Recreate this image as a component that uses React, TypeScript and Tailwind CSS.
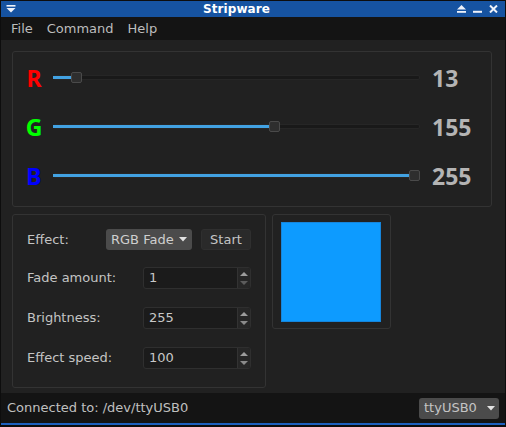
import React from 'react';

const channels = [
  { name: 'R', value: 13, color: 'text-[#ff0000]' },
  { name: 'G', value: 155, color: 'text-[#00ff00]' },
  { name: 'B', value: 255, color: 'text-[#0000ff]' },
];

function Slider({ value }: { value: number }) {
  const left = Math.round((value / 255) * 356);
  return (
    <div className="relative w-[367px] h-[24px] ml-[6px]">
      {/* groove */}
      <div className="absolute left-0 right-0 top-[9px] h-[5px] rounded-[2px] bg-[#191919] border border-[#262626]" />
      {/* filled part */}
      <div className="absolute left-0 top-[10px] h-[3px] bg-[#42a2e2]" style={{ width: left + 4 }} />
      {/* handle */}
      <div
        className="absolute top-[6px] w-[11px] h-[11px] rounded-[2px] bg-[#2e2e2e] border border-[#4a4a4a]"
        style={{ left }}
      />
    </div>
  );
}

function SpinBox({ value, downDim }: { value: string; downDim?: boolean }) {
  return (
    <div className="w-[108px] h-[22px] flex items-center rounded-[3px] bg-[#1b1b1b] border border-[#2f2f2f]">
      <span className="flex-1 pl-[5px] text-[#c8c8c8]">{value}</span>
      <div className="w-[13px] h-[20px] flex flex-col items-center justify-center gap-[5px] bg-[#262626] border-l border-[#333] rounded-r-[2px]">
        <svg width="8" height="4" viewBox="0 0 8 4">
          <path d="M0 4 L4 0 L8 4 Z" fill="#9c9c9c" />
        </svg>
        <svg width="8" height="4" viewBox="0 0 8 4">
          <path d="M0 0 L8 0 L4 4 Z" fill={downDim ? '#5c5c5c' : '#8a8a8a'} />
        </svg>
      </div>
    </div>
  );
}

function ComboArrow() {
  return (
    <svg width="8" height="5" viewBox="0 0 8 5">
      <path d="M0 0 L8 0 L4 4.5 Z" fill="#e2e2e2" />
    </svg>
  );
}

export default function App() {
  return (
    <div className="w-[506px] h-[427px] bg-[#0d0d0d] pt-px px-px pb-[2px] flex flex-col font-['DejaVu_Sans',sans-serif] text-[13px] overflow-hidden">
      {/* Title bar */}
      <div className="h-[16px] bg-[#1653a1] flex items-center px-[4px] text-white">
        <svg width="10" height="8" viewBox="0 0 10 8" className="ml-px">
          <rect x="0.5" y="0" width="9" height="1.6" fill="#eef2fa" />
          <path d="M0.5 3 L9.5 3 L5 7.5 Z" fill="#eef2fa" />
        </svg>
        <div className="flex-1 text-center font-bold text-[12px] leading-none tracking-[0.1px]">Stripware</div>
        <div className="flex items-center gap-[7px] mr-[3px]">
          <svg width="9" height="8" viewBox="0 0 9 8">
            <path d="M0 4.5 L4.5 0 L9 4.5 Z" fill="#eef2fa" />
            <rect x="0" y="6" width="9" height="1.8" fill="#eef2fa" />
          </svg>
          <svg width="9" height="8" viewBox="0 0 9 8">
            <rect x="0" y="5.8" width="9" height="2" fill="#eef2fa" />
          </svg>
          <svg width="9" height="8" viewBox="0 0 9 8">
            <path d="M1 0.5 L8 7.5 M8 0.5 L1 7.5" stroke="#eef2fa" strokeWidth="2" />
          </svg>
        </div>
      </div>

      {/* Menu bar */}
      <div className="h-[23px] bg-[#141414] flex items-center pl-[3px] text-[#bdbdbd]">
        <span className="px-[7px]">File</span>
        <span className="px-[7px]">Command</span>
        <span className="px-[7px]">Help</span>
      </div>

      {/* Main area */}
      <div className="h-[353px] bg-[#212121] pl-[11px] pt-[11px] flex flex-col">
        {/* RGB sliders */}
        <div className="w-[480px] h-[156px] rounded-[3px] border border-[#333] flex flex-col pt-[14px] gap-[25px]">
          {channels.map((c) => (
            <div key={c.name} className="h-[24px] flex items-center">
              <div className={`w-[26px] ml-[8px] text-center font-['Noto_Sans',sans-serif] font-bold text-[23px] leading-none ${c.color}`}>
                {c.name}
              </div>
              <Slider value={c.value} />
              <div className="ml-[12px] font-['Noto_Sans',sans-serif] font-bold text-[23px] leading-none text-[#b4b4b4]">
                {c.value}
              </div>
            </div>
          ))}
        </div>

        <div className="flex items-start gap-[6px] mt-[7px]">
          {/* Effect settings */}
          <div className="w-[254px] h-[174px] rounded-[3px] border border-[#333] pl-[14px] pt-[14px] flex flex-col text-[#c4c4c4]">
            <div className="h-[21px] flex items-center">
              <span className="w-[79px]">Effect:</span>
              <div className="w-[86px] h-[21px] rounded-[3px] bg-[#4b4b4b] flex items-center pl-[5px] pr-[5px] text-[#cfcfcf]">
                <span className="flex-1">RGB Fade</span>
                <ComboArrow />
              </div>
              <button className="ml-[9px] w-[50px] h-[21px] rounded-[3px] bg-[#2a2a2a] border border-[#2f2f2f] text-[#c4c4c4]">
                Start
              </button>
            </div>
            <div className="h-[22px] flex items-center mt-[17px]">
              <span className="w-[116px]">Fade amount:</span>
              <SpinBox value="1" downDim />
            </div>
            <div className="h-[22px] flex items-center mt-[18px]">
              <span className="w-[116px]">Brightness:</span>
              <SpinBox value="255" />
            </div>
            <div className="h-[22px] flex items-center mt-[18px]">
              <span className="w-[116px]">Effect speed:</span>
              <SpinBox value="100" />
            </div>
          </div>

          {/* Colour preview */}
          <div className="w-[119px] h-[115px] rounded-[3px] border border-[#333] pl-[8px] pt-[7px]">
            <div className="w-[100px] h-[100px] bg-[#0d9bff] border border-[#1685db]" />
          </div>
        </div>
      </div>

      {/* Status bar */}
      <div className="h-[30px] bg-[#141414] flex items-center pl-[6px] pr-[6px] text-[#c0c0c0]">
        <span className="flex-1">Connected to: /dev/ttyUSB0</span>
        <div className="w-[80px] h-[21px] rounded-[3px] bg-[#4b4b4b] flex items-center pl-[5px] pr-[4px] text-[#c4c4c4]">
          <span className="flex-1">ttyUSB0</span>
          <ComboArrow />
        </div>
      </div>
      <div className="h-[2px] bg-[#1d60be]" />
    </div>
  );
}
